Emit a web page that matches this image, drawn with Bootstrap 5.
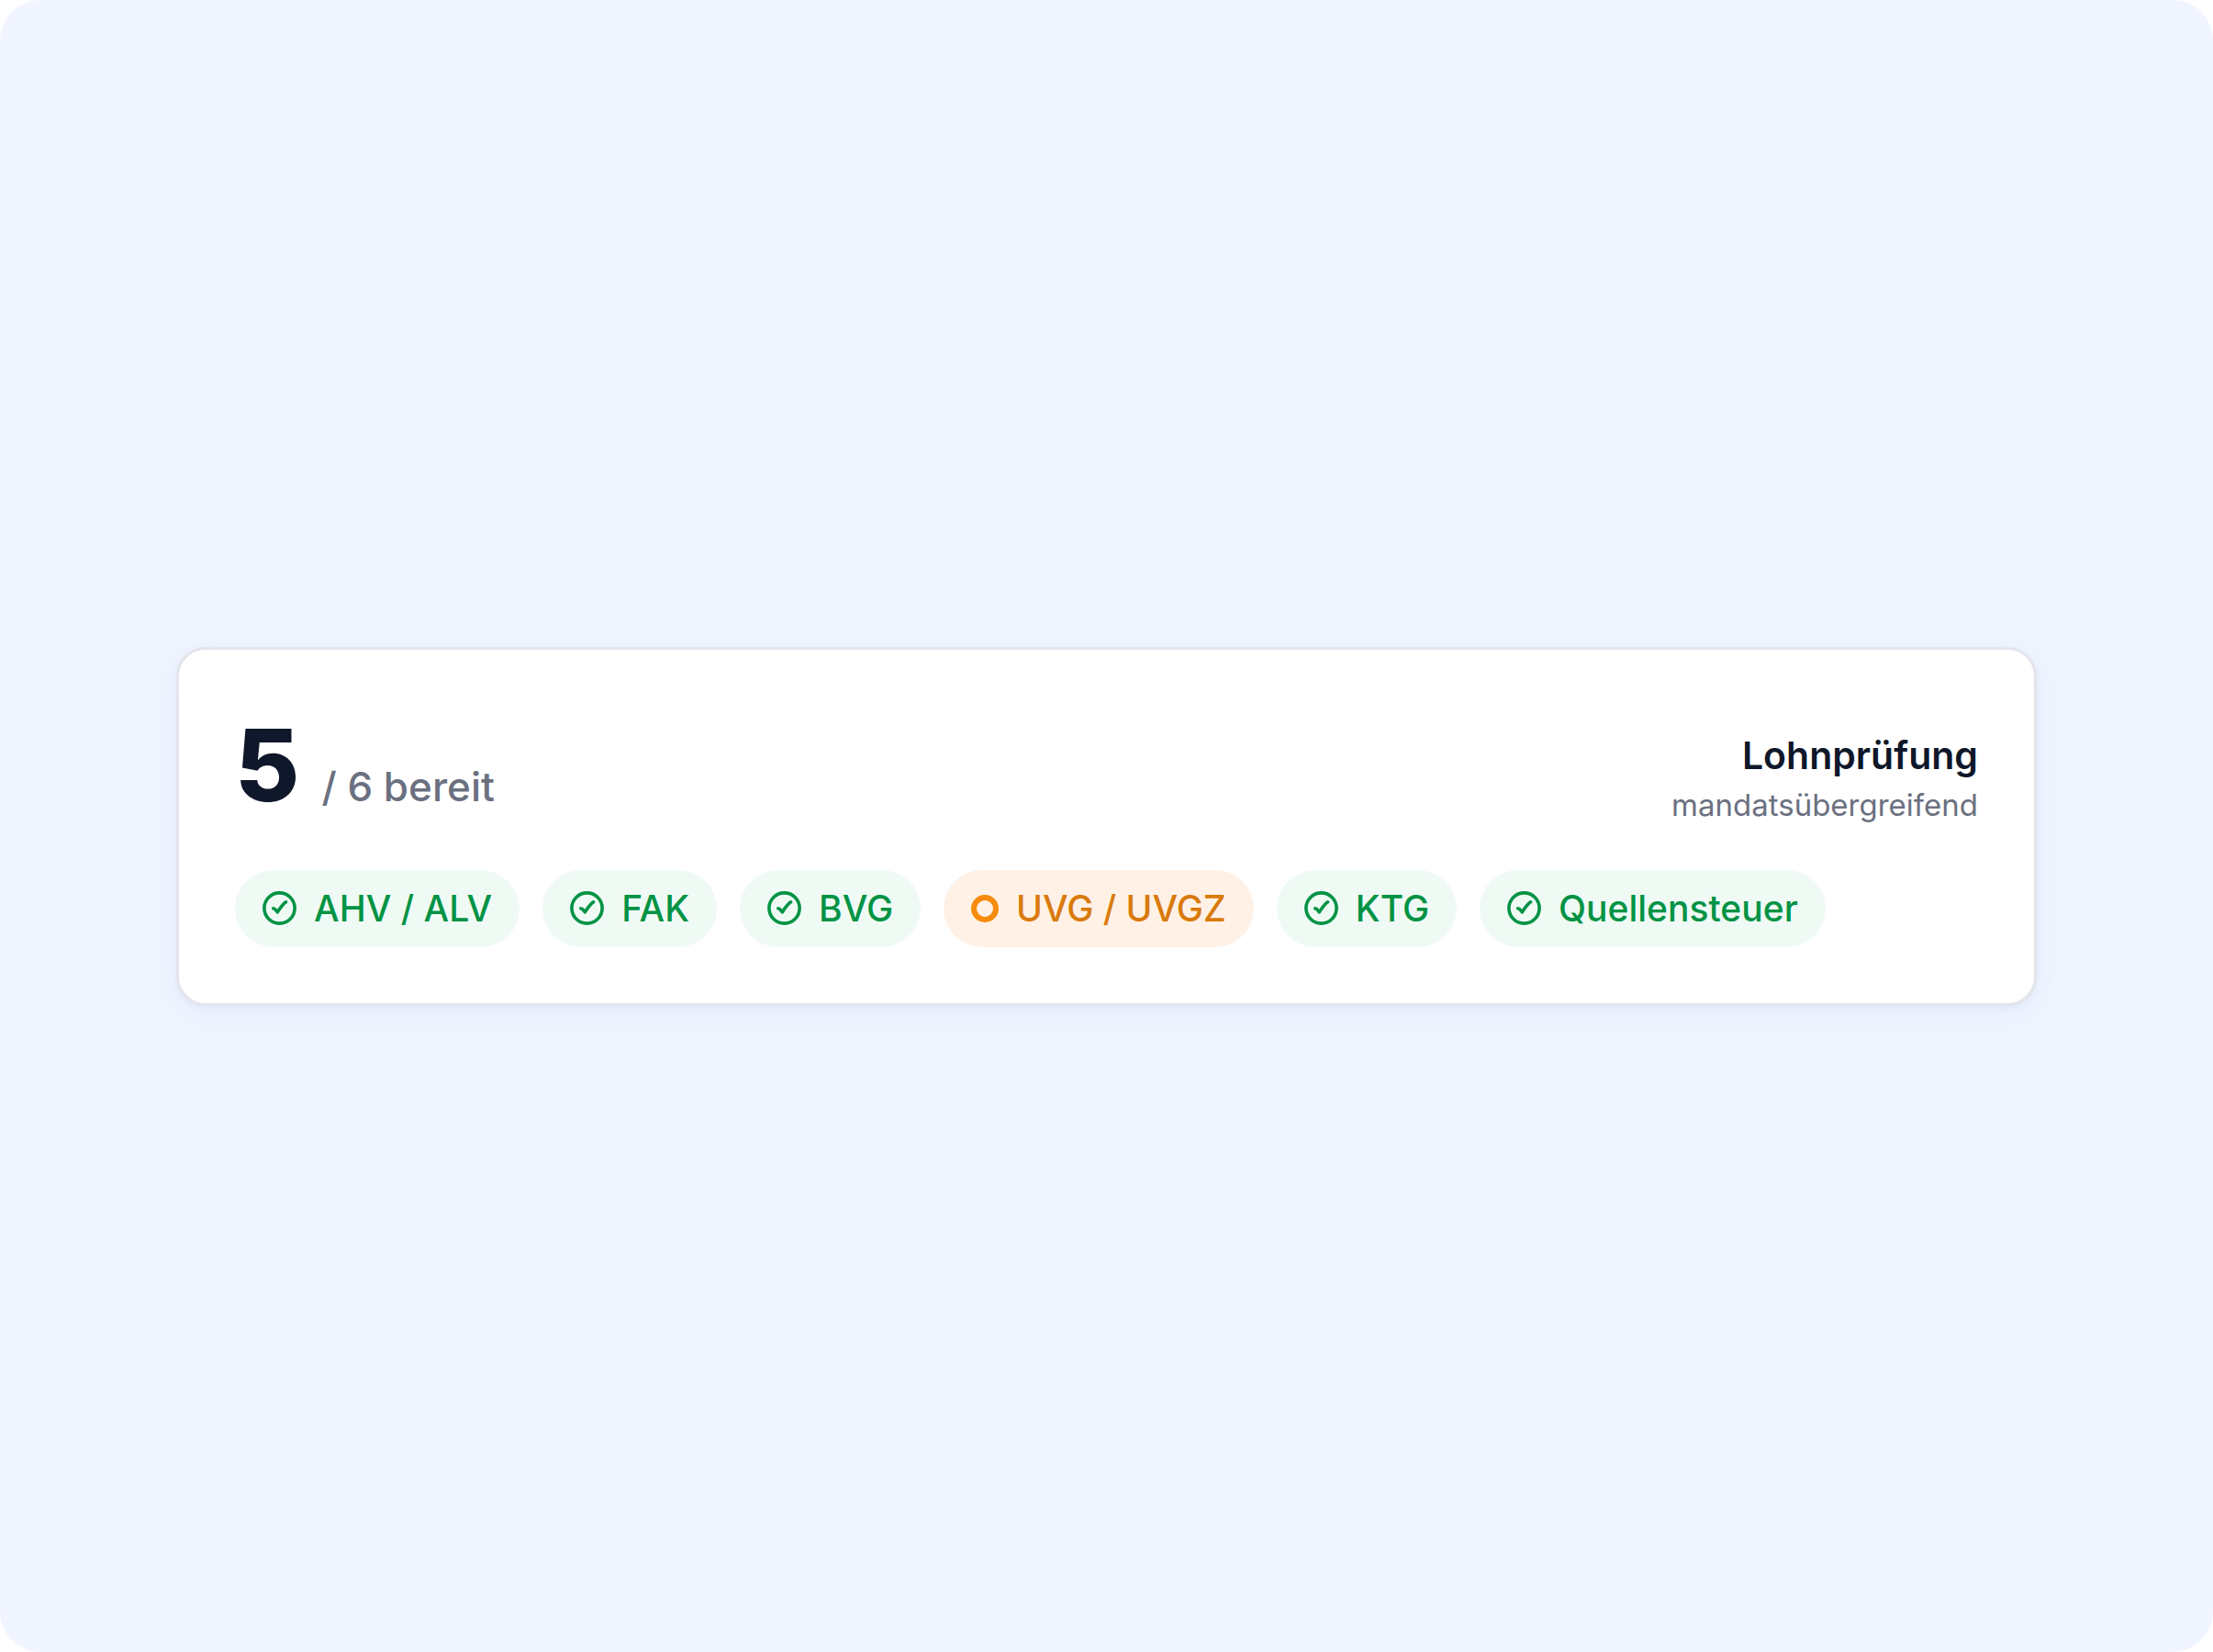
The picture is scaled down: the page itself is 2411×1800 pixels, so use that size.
<!DOCTYPE html>
<html lang="de">
<head>
<meta charset="utf-8">
<meta name="viewport" content="width=device-width, initial-scale=1">
<title>Lohnprüfung</title>
<link rel="stylesheet" href="https://cdn.jsdelivr.net/npm/bootstrap@5.3.0/dist/css/bootstrap.min.css">
<style>
  body { font-family: Inter, "Liberation Sans", sans-serif; background: #fff; color: #0f172a; }
  .stage { background: #f0f5ff; border-radius: 44px; padding: 48px 192px; }
  .status-card { border: 3px solid #e4e5ec; border-radius: 32px; padding: 61px; box-shadow: 0 8px 36px rgba(59, 110, 220, .06), 0 3px 9px rgba(20, 30, 80, .04); }
  .status-head { margin-bottom: 45px; }
  .ready-count { font-size: 108px; line-height: 130px; font-weight: 800; }
  .ready-total { font-size: 44px; line-height: 56px; font-weight: 500; color: #6b7080; }
  .ready-row { gap: 24px; }
  .check-title { font-size: 41px; line-height: 56px; font-weight: 600; }
  .check-scope { font-size: 33px; line-height: 52px; color: #6b7080; }
  .pill-list { gap: 25px; }
  .pill { gap: 19px; padding: 17px 30px; border-radius: 42px; font-size: 39px; line-height: 50px; font-weight: 500; background: #effaf5; color: #009344; }
  .pill-open { background: #fff1e6; color: #d97a0b; }
  .pill-open svg { color: #f68b0c; }
</style>
</head>
<body>
<main class="stage min-vh-100 d-flex flex-column justify-content-center">
  <section class="card status-card">
    <div class="status-head d-flex flex-wrap justify-content-between align-items-end">
      <div class="ready-row d-flex align-items-baseline pb-1">
        <span class="ready-count">5</span>
        <span class="ready-total">/ 6 bereit</span>
      </div>
      <div class="text-end">
        <h1 class="check-title m-0">Lohnprüfung</h1>
        <p class="check-scope m-0">mandatsübergreifend</p>
      </div>
    </div>
    <ul class="pill-list list-unstyled d-flex flex-wrap m-0">
      <li class="pill d-flex align-items-center"><svg width="37" height="37" aria-hidden="true"><use href="#done"/></svg>AHV / ALV</li>
      <li class="pill d-flex align-items-center"><svg width="37" height="37" aria-hidden="true"><use href="#done"/></svg>FAK</li>
      <li class="pill d-flex align-items-center"><svg width="37" height="37" aria-hidden="true"><use href="#done"/></svg>BVG</li>
      <li class="pill pill-open d-flex align-items-center"><svg width="30" height="30" viewBox="0 0 30 30" fill="none" stroke="currentColor" stroke-width="6" aria-hidden="true"><circle cx="15" cy="15" r="12"/></svg>UVG / UVGZ</li>
      <li class="pill d-flex align-items-center"><svg width="37" height="37" aria-hidden="true"><use href="#done"/></svg>KTG</li>
      <li class="pill d-flex align-items-center"><svg width="37" height="37" aria-hidden="true"><use href="#done"/></svg>Quellensteuer</li>
    </ul>
  </section>
</main>
<svg class="position-absolute" width="0" height="0" aria-hidden="true">
  <symbol id="done" viewBox="0 0 37 37">
    <g fill="none" stroke="currentColor" stroke-linecap="round" stroke-linejoin="round">
      <circle cx="18.5" cy="18.5" r="16.6" stroke-width="3.6"/>
      <path d="M11.8 18.9L13.4 19.4L16.3 22.8C19.4 18.3 21.8 14.4 25.6 11.8" stroke-width="3.6"/>
    </g>
  </symbol>
</svg>
<script src="https://cdn.jsdelivr.net/npm/bootstrap@5.3.0/dist/js/bootstrap.bundle.min.js"></script>
</body>
</html>
